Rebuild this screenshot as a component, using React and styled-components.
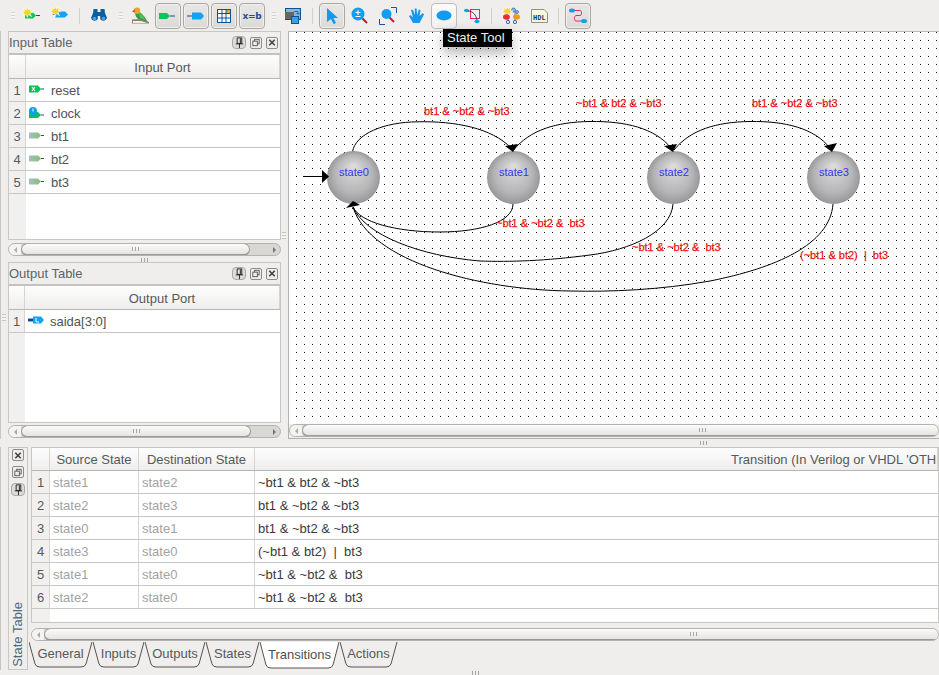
import styled, { createGlobalStyle } from "styled-components";

const GlobalStyle = createGlobalStyle`
    html, body {
        margin: 0;
        padding: 0;
        background: #efeeec;
    }
    * {
        box-sizing: border-box;
    }
`

const FONT = `"Liberation Sans", Arial, sans-serif`;

/* ---------- small drawings ---------- */

const Spark = ({ x, y }) => (
    <g transform={`translate(${x} ${y})`}>
        <path d="M4.500 -1 L5.500 2 L8.500 0 L7 3.500 L10 4 L7 5.500 L8.500 8.500 L5.200 6.500 L4.500 9.500 L3.200 6.500 L.5 8 L1.500 5.500 L-1 4.500 L1.500 3.200 L.5 .2 L3.200 2.200 Z" fill="#f7d21e" stroke="#fff" strokeWidth=".6" />
    </g>
);

const SparkGreen = () => (
    <OverflowSvg width="18" height="16" viewBox="0 0 18 16">
        <path d="M2 4.500 H10 L13 7.500 L10 10.500 H2 Z" fill="#15c45e" />
        <rect x="13" y="7" width="4" height="1" fill="#14509a" />
        <Spark x="0" y="0" />
    </OverflowSvg>
);

const SparkBlue = () => (
    <OverflowSvg width="18" height="16" viewBox="0 0 18 16">
        <path d="M4 3.500 H14 L17 6.500 L14 9.500 H4 Z" fill="#12a4ee" />
        <rect x="1" y="6" width="3" height="1" fill="#14509a" />
        <Spark x="0" y="-1" />
    </OverflowSvg>
);

const Binoculars = () => (
    <svg width="16" height="15" viewBox="0 0 16 15">
        <path d="M2.500 1 H6.500 V4 H9.500 V1 H13.500 L14 5 L16 10 A3.800 3.800 0 0 1 9.200 11 L9.200 8 H6.800 V11 A3.800 3.800 0 0 1 0 10 L2 5 Z" fill="#0c5f9f" />
        <circle cx="3.500" cy="10.500" r="1.800" fill="#4fa0d8" />
        <circle cx="12.500" cy="10.500" r="1.800" fill="#4fa0d8" />
    </svg>
);

const Bird = () => (
    <svg width="17" height="17" viewBox="0 0 17 17">
        <path d="M0 12.500 L8 12 L17 15 V16.500 H0 Z" fill="#9c7c6c" />
        <path d="M1 14 H9 L15 16 H1 Z" fill="#f2eeea" />
        <path d="M3 5 C7 3 11 7 16 15 L8 12.500 C5 12 3 9 3 5 Z" fill="#2e9e48" />
        <path d="M7 6 C10 7 12 10 13 13 L8 11 Z" fill="#57bf5a" />
        <circle cx="5" cy="3.800" r="3.200" fill="#eaa62c" />
        <path d="M2.500 2.500 L0 4.500 L3 5.500 Z" fill="#c8432b" />
    </svg>
);

const TagButtonGreen = () => (
    <svg width="18" height="8" viewBox="0 0 18 8">
        <path d="M0 1 H8 L11 4 L8 7 H0 Z" fill="#06c75c" />
        <rect x="11" y="3.500" width="5" height="1" fill="#14509a" />
    </svg>
);

const TagButtonBlue = () => (
    <svg width="18" height="8" viewBox="0 0 18 8">
        <rect x="0" y="3.500" width="6" height="1" fill="#14509a" />
        <path d="M5 .5 H14 L17 4 L14 7.500 H5 Z" fill="#0da5f2" />
    </svg>
);

const GridIcon = () => (
    <svg width="14" height="14" viewBox="0 0 14 14">
        <rect x=".5" y=".5" width="13" height="13" fill="#fff" stroke="#0b4f9e" />
        <rect x="9" y="1" width="4" height="3" fill="#f0a030" />
        <path d="M1 4.500 H13 M1 9 H13 M5 1 V13 M9 1 V13" stroke="#0b4f9e" strokeWidth="1" />
    </svg>
);

const ImportIcon = () => (
    <svg width="16" height="16" viewBox="0 0 16 16">
        <rect x=".5" y=".5" width="15" height="11" fill="#8cb8d8" stroke="#0b4f9e" />
        <rect x="0" y="4" width="9" height="7" fill="#666" />
        <rect x="6.500" y="8.500" width="7" height="7" fill="#3fa0e0" stroke="#0b4f9e" />
        <path d="M9 3.500 H13 V6 M11.500 5 L13 6.500 L14.500 5" fill="none" stroke="#0b4f9e" strokeWidth=".8" />
    </svg>
);

const CursorIcon = () => (
    <svg width="14" height="16" viewBox="0 0 14 16">
        <path d="M2 0 L13 10 H8.500 L11 15 L8.500 16 L6 11 L2 14 Z" fill="#1796ee" />
    </svg>
);

const ZoomIcon = () => (
    <svg width="18" height="18" viewBox="0 0 18 18">
        <path d="M10 10 L16 16" stroke="#b81f3a" strokeWidth="2" />
        <circle cx="7" cy="7" r="6.500" fill="#0da0f0" />
        <path d="M4.500 5.500 H9.500 M7 3 V8 M4.500 9.500 H9.500" stroke="#fff" strokeWidth="1" />
    </svg>
);

const ZoomFitIcon = () => (
    <svg width="18" height="18" viewBox="0 0 18 18">
        <path d="M.5 12 V17.500 H6 M12 .5 H17.500 V6" fill="none" stroke="#1c4fa8" strokeWidth="1" />
        <path d="M10 10 L15 15" stroke="#b81f3a" strokeWidth="2" />
        <circle cx="7.500" cy="7" r="5" fill="#0da0f0" />
    </svg>
);

const HandIcon = () => (
    <svg width="17" height="16" viewBox="0 0 17 16">
        <path d="M5 15 L1 8 L2.500 7 L5 9.500 L3 2 L4.800 1.500 L6.800 7 L6.800 .5 H8.600 L9.200 7 L10.800 1.500 L12.500 2 L11.500 8 L14.800 5 L16 6.500 L11.500 15 Z" fill="#1796ee" />
    </svg>
);

const EllipseIcon = () => (
    <svg width="16" height="11" viewBox="0 0 16 11">
        <ellipse cx="8" cy="5.500" rx="7.500" ry="5" fill="#0c9cf2" />
    </svg>
);

const TransitionIcon = () => (
    <svg width="17" height="16" viewBox="0 0 17 16">
        <rect x="6.500" y="1.500" width="9" height="9" fill="none" stroke="#e02a6a" />
        <ellipse cx="2.500" cy="2.500" rx="2.500" ry="1.800" fill="#0da0f0" />
        <ellipse cx="13" cy="13.500" rx="2.500" ry="1.800" fill="#0da0f0" />
        <path d="M4 3 C9 3 12 7 13 12" fill="none" stroke="#123" strokeWidth=".8" />
    </svg>
);

const GeneratorIcon = () => (
    <OverflowSvg width="17" height="17" viewBox="0 0 17 17">
        <circle cx="10.500" cy="3" r="2" fill="#8db7e0" stroke="#1c4fa8" strokeWidth=".6" />
        <circle cx="14" cy="5" r="1.500" fill="#8db7e0" stroke="#1c4fa8" strokeWidth=".6" />
        <Spark x="0" y="0" />
        <path d="M5 11 V14 M12 5 V14" stroke="#1c4fa8" strokeWidth=".7" />
        <ellipse cx="3.500" cy="10" rx="3.500" ry="2.700" fill="#ea2b3a" />
        <ellipse cx="13.500" cy="10" rx="3.500" ry="2.700" fill="#f59a14" />
        <circle cx="5" cy="15" r="1.700" fill="#cfe1f2" stroke="#1c4fa8" strokeWidth=".8" />
        <circle cx="12" cy="15" r="1.700" fill="#cfe1f2" stroke="#1c4fa8" strokeWidth=".8" />
    </OverflowSvg>
);

const HdlIcon = () => (
    <svg width="17" height="14" viewBox="0 0 17 14">
        <path d="M.5 .5 H13 L16.500 4 V13.500 H.5 Z" fill="#fdf7e0" stroke="#9a8a80" />
        <HdlText x="2" y="10.500">HDL</HdlText>
    </svg>
);

const FlowIcon = () => (
    <svg width="18" height="16" viewBox="0 0 18 16">
        <path d="M4 2.500 H11 C13 2.500 13 7.500 11 7.500 H7 C5 7.500 5 13 7 13 H13" fill="none" stroke="#e02a6a" strokeWidth="1" />
        <ellipse cx="3" cy="2.500" rx="3" ry="2" fill="#0da0f0" />
        <ellipse cx="15" cy="13" rx="3" ry="2" fill="#0da0f0" />
    </svg>
);

const PortIcon = ({ kind }) => {
    if (kind === "reset") {
        return (
            <svg width="15" height="8" viewBox="0 0 15 8">
                <path d="M0 .5 H9 L12 4 L9 7.500 H0 Z" fill="#07c258" />
                <rect x="12" y="3.500" width="3" height="1" fill="#14509a" />
                <path d="M3 2 L6 6 M6 2 L3 6" stroke="#fff" strokeWidth="1.200" />
            </svg>
        )
    }
    if (kind === "clock") {
        return (
            <svg width="15" height="13" viewBox="0 0 15 13">
                <path d="M0 6 H9 L12 9 L9 12 H0 Z" fill="#07c258" />
                <rect x="12" y="8.500" width="3" height="1" fill="#14509a" />
                <circle cx="4" cy="5" r="4" fill="#0d9fee" />
                <path d="M4 2.500 V5.500" stroke="#fff" strokeWidth="1" />
            </svg>
        )
    }
    if (kind === "output") {
        return (
            <svg width="16" height="8" viewBox="0 0 16 8">
                <rect x="0" y="2.500" width="5" height="3" fill="#14509a" />
                <path d="M5 .5 H13 L16 4 L13 7.500 H5 Z" fill="#0da5f2" />
                <path d="M8 2 V6 H11" fill="none" stroke="#fff" strokeWidth="1" />
            </svg>
        )
    }
    return (
        <svg width="15" height="7" viewBox="0 0 15 7">
            <defs>
                <linearGradient id="portFill" x1="0" y1="0" x2="1" y2="0">
                    <stop offset="0" stopColor="#a8bcc8" />
                    <stop offset="1" stopColor="#82c070" />
                </linearGradient>
            </defs>
            <path d="M0 .5 H9 L12 3.500 L9 6.500 H0 Z" fill="url(#portFill)" />
            <rect x="12" y="3" width="3" height="1" fill="#33506a" />
        </svg>
    )
};

const PinIcon = () => (
    <svg width="13" height="13" viewBox="0 0 13 13">
        <path d="M4.500 1.500 H9.500 V7.500 H4.500 Z M3 8 H11 M7 8 V12.500 M8 2 V7" fill="none" stroke="#222" strokeWidth="1" />
    </svg>
);

const FloatIcon = () => (
    <svg width="11" height="11" viewBox="0 0 11 11">
        <rect x="4" y="2" width="5" height="5" fill="none" stroke="#555" />
        <rect x="2" y="4" width="5" height="5" fill="#efeeec" stroke="#555" />
    </svg>
);

const CloseIcon = () => (
    <svg width="11" height="11" viewBox="0 0 11 11">
        <path d="M2.500 2.500 L8.500 8.500 M8.500 2.500 L2.500 8.500" stroke="#444" strokeWidth="1.800" />
    </svg>
);

/* ---------- the diagram ---------- */

const STATES = [
    { name: "state0", x: 353 },
    { name: "state1", x: 513 },
    { name: "state2", x: 673 },
    { name: "state3", x: 833 },
];

const EDGES = [
    "M352.500 152 C355 134 384 122 418 121.800 C455 121 492 128 511 148",
    "M513.500 150 C530 130 556 122 590 121.500 C625 121 655 128 671 148",
    "M674 150 C690 130 716 122 750 121.500 C785 121 814 128 830 148",
    "M513 204 C513 222 480 232 440 232 C395 232 360 222 353 207",
    "M673 204 C671 232 630 250 590 255 C545 261 510 262 480 261 C420 256 365 235 353 207",
    "M833 204 C830 245 775 268 710 281 C660 290 610 292 570 291 C480 290 370 262 353 207",
];

const LABELS = [
    { text: "bt1 & ~bt2 & ~bt3", x: 424, y: 115 },
    { text: "~bt1 & bt2 & ~bt3", x: 576, y: 107 },
    { text: "bt1 & ~bt2 & ~bt3", x: 752, y: 107 },
    { text: "~bt1 & ~bt2 &  bt3", x: 496, y: 227 },
    { text: "~bt1 & ~bt2 &  bt3", x: 632, y: 251 },
    { text: "(~bt1 & bt2)  |  bt3", x: 800, y: 259 },
];

const ARROWS = [
    "505,146 518,144 513,152",
    "664,146 677,144 673,152",
    "824,146 837,143 832,152",
    "346,208 360,205 353,201",
    "322,170 322,183 329,176.500",
];

const Diagram = () => (
    <DiagramSvg>
        <defs>
            <pattern id="dots" x="7" y="0" width="8" height="8" patternUnits="userSpaceOnUse">
                <rect x="0" y="0" width="1" height="1" fill="#111" />
            </pattern>
            <radialGradient id="ball" cx=".5" cy=".5" r=".5" fx=".5" fy=".28">
                <stop offset="0" stopColor="#dedede" />
                <stop offset=".7" stopColor="#b6b6b8" />
                <stop offset="1" stopColor="#98989c" />
            </radialGradient>
        </defs>
        <rect width="100%" height="100%" fill="url(#dots)" />
        <g transform="translate(-289 -32)">
            <path d="M303 176.500 H323" stroke="#000" strokeWidth="1" />
            {EDGES.map(d => <path key={d} d={d} fill="none" stroke="#000" strokeWidth="1" />)}
            {STATES.map(s => (
                <g key={s.name}>
                    <circle cx={s.x + 0.5} cy="177.500" r="26.500" fill="url(#ball)" />
                    <StateName x={s.x + 1} y="176">{s.name}</StateName>
                </g>
            ))}
            {ARROWS.map(p => <polygon key={p} points={p} fill="#000" />)}
            {LABELS.map(l => <EdgeLabel key={l.x} x={l.x} y={l.y} xmlSpace="preserve">{l.text}</EdgeLabel>)}
        </g>
    </DiagramSvg>
);

/* ---------- repeated widgets ---------- */

const ScrollBar = ({ thumb, rightArrow }) => (
    <Trough>
        <ArrowZone>
            <TinyArrow />
        </ArrowZone>
        <Thumb $width={thumb}>
            <GripMarks />
        </Thumb>
        {rightArrow && (
            <RightZone>
                <TinyArrow $right />
            </RightZone>
        )}
    </Trough>
);

const PanelButtons = () => (
    <TitleButtons>
        <PinBox><PinIcon /></PinBox>
        <SquareBox><FloatIcon /></SquareBox>
        <SquareBox><CloseIcon /></SquareBox>
    </TitleButtons>
);

const INPUTS = [
    { name: "reset", kind: "reset" },
    { name: "clock", kind: "clock" },
    { name: "bt1", kind: "plain" },
    { name: "bt2", kind: "plain" },
    { name: "bt3", kind: "plain" },
];

const TRANSITIONS = [
    ["state1", "state2", "~bt1 & bt2 & ~bt3"],
    ["state2", "state3", "bt1 & ~bt2 & ~bt3"],
    ["state0", "state1", "bt1 & ~bt2 & ~bt3"],
    ["state3", "state0", "(~bt1 & bt2)  |  bt3"],
    ["state1", "state0", "~bt1 & ~bt2 &  bt3"],
    ["state2", "state0", "~bt1 & ~bt2 &  bt3"],
];

const TABS = [
    { label: "General", width: 64 },
    { label: "Inputs", width: 52 },
    { label: "Outputs", width: 61 },
    { label: "States", width: 54 },
    { label: "Transitions", width: 80, active: true },
    { label: "Actions", width: 58 },
];

const TabItem = ({ label, width, active }) => {
    const h = active ? 27 : 26;
    const d = `M0 0 L6 ${h - 4} Q7 ${h - 1} 11 ${h - 1} H${width - 12} Q${width - 8} ${h - 1} ${width - 7} ${h - 4} L${width - 1} 0`;
    return (
        <Tab $width={width} $active={active}>
            <TabShape width={width} height={h}>
                <path d={d} fill={active ? "#fff" : "none"} stroke="#55534f" strokeWidth="1" />
            </TabShape>
            <TabLabel $active={active}>{label}</TabLabel>
        </Tab>
    )
};

export default function App(){
    return(
        <Window>
            <GlobalStyle />
            <Toolbar>
                <Grip />
                <Tool><SparkGreen /></Tool>
                <Tool><SparkBlue /></Tool>
                <Separator />
                <Tool><Binoculars /></Tool>
                <Grip />
                <Tool><Bird /></Tool>
                <Tool $raised><TagButtonGreen /></Tool>
                <Tool $raised><TagButtonBlue /></Tool>
                <Tool $raised><GridIcon /></Tool>
                <Tool $raised><EqText>x=b</EqText></Tool>
                <Grip />
                <Tool><ImportIcon /></Tool>
                <Separator />
                <Tool $raised><CursorIcon /></Tool>
                <Tool><ZoomIcon /></Tool>
                <Tool><ZoomFitIcon /></Tool>
                <Tool><HandIcon /></Tool>
                <Tool $hover><EllipseIcon /></Tool>
                <Tool><TransitionIcon /></Tool>
                <Separator />
                <Tool><GeneratorIcon /></Tool>
                <Tool><HdlIcon /></Tool>
                <Separator />
                <Tool $raised><FlowIcon /></Tool>
                <Tooltip>State Tool</Tooltip>
            </Toolbar>
            <Upper>
                <LeftGutter>
                    <SideGrip />
                </LeftGutter>
                <LeftColumn>
                    <Panel $height={227}>
                        <PanelTitle>
                            <span>Input Table</span>
                            <PanelButtons />
                        </PanelTitle>
                        <TableArea $num={17}>
                            <HeadRow $columns="17px 1fr">
                                <HeadCell />
                                <HeadCell $shift={20}>Input Port</HeadCell>
                            </HeadRow>
                            {INPUTS.map((port, i) => (
                                <Row key={port.name} $columns="17px 1fr">
                                    <NumCell>{i + 1}</NumCell>
                                    <PortCell>
                                        <PortSlot><PortIcon kind={port.kind} /></PortSlot>
                                        {port.name}
                                    </PortCell>
                                </Row>
                            ))}
                        </TableArea>
                        <ScrollSlot>
                            <ScrollBar thumb={229} rightArrow />
                        </ScrollSlot>
                    </Panel>
                    <HandleBar><GripMarks /></HandleBar>
                    <Panel $height={177}>
                        <PanelTitle>
                            <span>Output Table</span>
                            <PanelButtons />
                        </PanelTitle>
                        <TableArea $num={16}>
                            <HeadRow $columns="16px 1fr">
                                <HeadCell />
                                <HeadCell $shift={20}>Output Port</HeadCell>
                            </HeadRow>
                            <Row $columns="16px 1fr">
                                <NumCell>1</NumCell>
                                <PortCell>
                                    <PortSlot><PortIcon kind="output" /></PortSlot>
                                    saida[3:0]
                                </PortCell>
                            </Row>
                        </TableArea>
                        <ScrollSlot $low>
                            <ScrollBar thumb={230} rightArrow />
                        </ScrollSlot>
                    </Panel>
                </LeftColumn>
                <MiddleGutter>
                    <SideGrip />
                </MiddleGutter>
                <CanvasColumn>
                    <Canvas>
                        <Diagram />
                    </Canvas>
                    <ScrollSlot $canvas>
                        <ScrollBar thumb={800} />
                    </ScrollSlot>
                </CanvasColumn>
            </Upper>
            <HandleBar $wide><GripMarks /></HandleBar>
            <Dock>
                <DockSide>
                    <SquareBox><CloseIcon /></SquareBox>
                    <SquareBox><FloatIcon /></SquareBox>
                    <PinBox><PinIcon /></PinBox>
                    <VerticalTitle>State Table</VerticalTitle>
                </DockSide>
                <DockMain>
                    <TableArea $num={18} $dock>
                        <HeadRow $columns="18px 89px 116px 1fr" $short>
                            <HeadCell />
                            <HeadCell>Source State</HeadCell>
                            <HeadCell>Destination State</HeadCell>
                            <HeadCell $pad={476}>Transition (In Verilog or VHDL 'OTHERS' allowed)</HeadCell>
                        </HeadRow>
                        {TRANSITIONS.map((t, i) => (
                            <Row key={i} $columns="18px 89px 116px 1fr">
                                <NumCell>{i + 1}</NumCell>
                                <StateCell>{t[0]}</StateCell>
                                <StateCell>{t[1]}</StateCell>
                                <ConditionCell>{t[2]}</ConditionCell>
                            </Row>
                        ))}
                    </TableArea>
                    <ScrollSlot $dock>
                        <ScrollBar thumb={1298} />
                    </ScrollSlot>
                    <TabBar>
                        {TABS.map(tab => <TabItem key={tab.label} {...tab} />)}
                    </TabBar>
                </DockMain>
            </Dock>
            <HandleBar $foot><GripMarks /></HandleBar>
        </Window>
    )
}

/* ---------- styles ---------- */

const Window = styled.div`
    width: 939px;
    height: 675px;
    overflow: hidden;
    background: #efeeec;
    font-family: ${FONT};
    font-size: 13px;
    color: #4c4c4c;
    display: flex;
    flex-direction: column;
`

const Toolbar = styled.div`
    position: relative;
    height: 31px;
    flex: none;
    display: flex;
    align-items: center;
    padding-left: 5px;
`

const Tool = styled.div`
    width: 26px;
    height: 26px;
    margin: 0 1px;
    flex: none;
    display: flex;
    align-items: center;
    justify-content: center;
    border-radius: 4px;
    border: 1px solid transparent;
    ${props => props.$raised && `
        border-color: #a9a7a3;
        background: linear-gradient(#e9e7e5, #dcdad7);
        box-shadow: inset 0 0 0 1px #f1f0ee;
    `}
    ${props => props.$hover && `
        border-color: #c0bebb;
        background: linear-gradient(#fbfbfa, #f1f0ee);
    `}
`

const OverflowSvg = styled.svg`
    overflow: visible;
`

const Grip = styled.div`
    width: 13px;
    flex: none;
    height: 8px;
    padding-left: 6px;
    &::before {
        content: "";
        display: block;
        width: 4px;
        height: 8px;
        background: repeating-linear-gradient(#d6d4d1 0 1px, #f6f5f4 1px 3px);
    }
`

const Separator = styled.div`
    width: 11px;
    flex: none;
    height: 16px;
    &::before {
        content: "";
        display: block;
        width: 1px;
        height: 16px;
        margin-left: 5px;
        background: #d2d0cd;
    }
`

const EqText = styled.span`
    font-size: 9px;
    font-weight: bold;
    color: #1c4fa8;
    font-family: "DejaVu Sans", sans-serif;
    letter-spacing: -0.3px;
`

const HdlText = styled.text`
    font-size: 7px;
    font-weight: bold;
    fill: #123a7a;
    font-family: "Liberation Mono", monospace;
`

const Tooltip = styled.div`
    position: absolute;
    left: 443px;
    top: 29px;
    width: 69px;
    height: 18px;
    padding-left: 4px;
    background: #000;
    color: #eee;
    font-size: 13px;
    line-height: 18px;
    white-space: nowrap;
    z-index: 5;
    box-shadow: 0 6px 14px rgba(0, 0, 0, 0.3);
`

const Upper = styled.div`
    height: 408px;
    flex: none;
    display: flex;
`

const LeftGutter = styled.div`
    width: 8px;
    flex: none;
    padding-top: 283px;
    padding-left: 1px;
    border-left: 1px solid #c9c7c3;
`

const MiddleGutter = styled.div`
    width: 7px;
    flex: none;
    padding-top: 201px;
    padding-left: 1px;
`

const SideGrip = styled.div`
    width: 4px;
    height: 7px;
    background: repeating-linear-gradient(#c4c2be 0 1px, #f6f5f4 1px 3px);
`

const LeftColumn = styled.div`
    width: 273px;
    flex: none;
    display: flex;
    flex-direction: column;
`

const Panel = styled.div`
    height: ${props => props.$height}px;
    flex: none;
    display: flex;
    flex-direction: column;
`

const PanelTitle = styled.div`
    height: 24px;
    flex: none;
    display: flex;
    align-items: center;
    justify-content: space-between;
    padding: 0 2px 0 0;
    border: 1px solid #c9c7c3;
    border-bottom: 2px solid #c4c2be;
    color: #5c6468;
    line-height: 20px;
`

const TitleButtons = styled.div`
    display: flex;
    align-items: center;
    gap: 4px;
`

const SquareBox = styled.div`
    width: 12px;
    height: 12px;
    display: flex;
    align-items: center;
    justify-content: center;
    border: 1px solid #8e8c88;
    border-radius: 2px;
`

const PinBox = styled.div`
    width: 14px;
    height: 13px;
    display: flex;
    align-items: center;
    justify-content: center;
    border: 1px solid #a9a7a3;
    border-radius: 4px;
    background: #dedcd9;
`

const TableArea = styled.div`
    flex: 1;
    min-height: 0;
    overflow: hidden;
    border: 1px solid #c9c7c3;
    border-top: ${props => props.$dock ? "1px solid #c9c7c3" : "none"};
    background: linear-gradient(to right, #f1f0ee ${props => props.$num}px, #fff ${props => props.$num}px);
`

const HeadRow = styled.div`
    display: grid;
    grid-template-columns: ${props => props.$columns};
    height: ${props => props.$short ? 23 : 24}px;
    border-bottom: 1px solid #b8b6b2;
    background: linear-gradient(#fdfdfd, #efeeec);
`

const HeadCell = styled.div`
    display: flex;
    align-items: center;
    justify-content: ${props => props.$pad ? "flex-start" : "center"};
    padding-left: ${props => props.$pad || props.$shift || 0}px;
    padding-top: 1px;
    border-right: 1px solid #d6d4d1;
    color: #55595c;
    white-space: nowrap;
    overflow: hidden;
`

const Row = styled.div`
    display: grid;
    grid-template-columns: ${props => props.$columns};
    height: 23px;
    border-bottom: 1px solid #c9c7c3;
    background: #fff;
`

const NumCell = styled.div`
    display: flex;
    align-items: center;
    justify-content: center;
    background: #f1f0ee;
    border-right: 1px solid #d6d4d1;
    color: #55595c;
`

const PortCell = styled.div`
    display: flex;
    align-items: center;
    color: #4e5256;
`

const PortSlot = styled.div`
    width: 25px;
    flex: none;
    padding-left: 3px;
    padding-bottom: 2px;
    display: flex;
`

const StateCell = styled.div`
    display: flex;
    align-items: center;
    padding-left: 3px;
    color: #a3a3a3;
    border-right: 1px solid #d6d4d1;
`

const ConditionCell = styled.div`
    display: flex;
    align-items: center;
    padding-left: 3px;
    color: #3a3a3a;
    white-space: pre;
`

const ScrollSlot = styled.div`
    height: ${props => props.$canvas ? 14 : 18}px;
    flex: none;
    padding-top: ${props => props.$canvas ? 0 : 3}px;
    ${props => props.$low && `
        height: 16px;
        padding-top: 2px;
    `}
    ${props => props.$dock && `
        height: 19px;
        padding-top: 5px;
    `}
`

const Trough = styled.div`
    height: 13px;
    display: flex;
    overflow: hidden;
    border: 1px solid #b4b2ae;
    border-radius: 7px;
    background: #d9d7d4;
`

const ArrowZone = styled.div`
    width: 12px;
    flex: none;
    display: flex;
    align-items: center;
    justify-content: center;
    background: #f4f3f1;
`

const RightZone = styled.div`
    flex: 1;
    display: flex;
    align-items: center;
    justify-content: flex-end;
    padding-right: 4px;
`

const TinyArrow = styled.div`
    width: 0;
    height: 0;
    border-top: 3px solid transparent;
    border-bottom: 3px solid transparent;
    ${props => props.$right ? "border-left: 3px solid #777;" : "border-right: 3px solid #aaa;"}
`

const Thumb = styled.div`
    width: ${props => props.$width}px;
    flex: none;
    margin: -1px 0;
    display: flex;
    align-items: center;
    justify-content: center;
    border: 1px solid #9c9a96;
    border-bottom-width: 2px;
    border-radius: 7px;
    background: linear-gradient(#fbfbfa, #e6e4e1);
`

const GripMarks = styled.div`
    width: 7px;
    height: 4px;
    background: repeating-linear-gradient(to right, #a8a6a2 0 1px, transparent 1px 3px);
`

const HandleBar = styled.div`
    flex: none;
    height: ${props => props.$wide ? 8 : props.$foot ? 5 : 4}px;
    display: flex;
    align-items: center;
    justify-content: center;
    ${props => props.$wide && "padding-left: 467px;"}
    ${props => props.$foot && "padding-left: 12px;"}
`

const CanvasColumn = styled.div`
    flex: 1;
    min-width: 0;
    display: flex;
    flex-direction: column;
    border-left: 1px solid #b4b2ae;
    border-bottom: 1px solid #b4b2ae;
`

const Canvas = styled.div`
    flex: 1;
    min-height: 0;
    background: #fff;
    border-top: 1px solid #bdbbb7;
    overflow: hidden;
`

const DiagramSvg = styled.svg`
    display: block;
    width: 100%;
    height: 100%;
`

const StateName = styled.text`
    font-family: ${FONT};
    font-size: 11px;
    fill: #3434f0;
    text-anchor: middle;
`

const EdgeLabel = styled.text`
    font-family: ${FONT};
    font-size: 11px;
    fill: #f01010;
    stroke: #f01010;
    stroke-width: 0.25px;
    white-space: pre;
`

const Dock = styled.div`
    height: 223px;
    flex: none;
    display: flex;
    padding-left: 8px;
    border-left: 1px solid #c9c7c3;
`

const DockSide = styled.div`
    width: 20px;
    flex: none;
    margin-left: -1px;
    display: flex;
    flex-direction: column;
    align-items: center;
    gap: 5px;
    padding-top: 1px;
    border: 1px solid #c9c7c3;
`

const VerticalTitle = styled.div`
    margin-top: auto;
    writing-mode: vertical-rl;
    transform: rotate(180deg);
    color: #4f6a78;
    padding-top: 2px;
    line-height: 16px;
    white-space: nowrap;
`

const DockMain = styled.div`
    flex: 1;
    min-width: 0;
    margin-left: 3px;
    display: flex;
    flex-direction: column;
`

const TabBar = styled.div`
    height: 28px;
    flex: none;
    display: flex;
    margin-left: -2px;
`

const Tab = styled.div`
    position: relative;
    width: ${props => props.$width}px;
    flex: none;
    text-align: center;
`

const TabShape = styled.svg`
    position: absolute;
    left: 0;
    top: 0;
`

const TabLabel = styled.span`
    position: relative;
    display: block;
    padding-right: 1px;
    line-height: ${props => props.$active ? 26 : 24}px;
    color: ${props => props.$active ? "#4c4f52" : "#55595c"};
`
